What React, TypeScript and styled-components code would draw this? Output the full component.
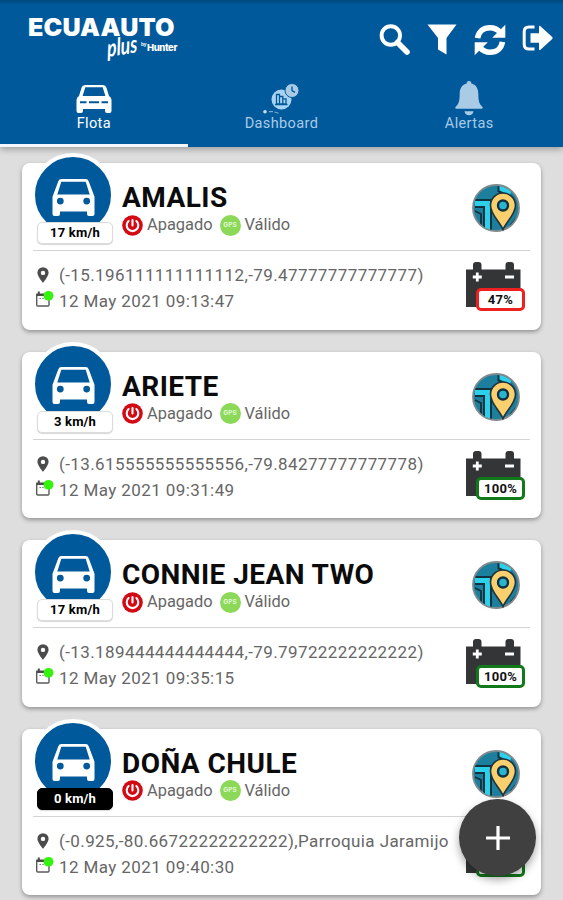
import React from 'react';
import styled, { createGlobalStyle } from 'styled-components';

const GlobalStyle = createGlobalStyle`
  *, *::before, *::after { box-sizing: border-box; }
  html, body { margin: 0; padding: 0; }
  body { background: #dedede; font-family: Roboto, "Liberation Sans", sans-serif; overflow: hidden; }
  svg { display: block; flex: none; }
`;

const Screen = styled.div`
  position: relative;
  width: 563px;
  height: 900px;
  overflow: hidden;
  background: #dedede;
  display: flex;
  flex-direction: column;
`;

const Header = styled.header`
  flex: none;
  height: 146.5px;
  background: linear-gradient(#00477d 0, #00599b 5px, #00599b 100%);
  box-shadow: 0 2px 7px rgba(0, 0, 0, 0.32);
  display: flex;
  flex-direction: column;
`;

const AppBar = styled.div`
  height: 74px;
  display: flex;
  justify-content: space-between;
  padding: 15px 10px 0 28px;
`;

const Logo = styled.div`
  display: flex;
  flex-direction: column;
  color: #fff;
`;

const LogoName = styled.div`
  font: 900 24.4px/24px Inter, sans-serif;
  letter-spacing: 0.1px;
  white-space: nowrap;
  transform-origin: 0 50%;
  transform: scaleX(1.03);
`;

const LogoSub = styled.div`
  display: flex;
  align-items: center;
  height: 17px;
  padding-left: 79px;
`;

const LogoScript = styled.span`
  font: italic 700 24px/20px Lato, sans-serif;
  width: 34px;
  transform-origin: 0 50%;
  transform: rotate(-9deg) skewX(-6deg) scaleX(0.74);
  white-space: nowrap;
`;

const LogoBy = styled.span`
  font: 700 4.5px/8px Inter, sans-serif;
  width: 6px;
  align-self: flex-start;
  margin-top: 2px;
`;

const LogoBrand = styled.span`
  font: 800 9.5px/12px Inter, sans-serif;
  letter-spacing: -0.4px;
`;

const Actions = styled.div`
  display: flex;
  align-items: flex-start;
  padding-top: 9px;
  color: #fff;
`;

const Action = styled.span<{ $gap: number }>`
  margin-left: ${(p) => p.$gap}px;
`;

const Tabs = styled.nav`
  height: 72.5px;
  display: grid;
  grid-template-columns: repeat(3, 1fr);
`;

const Tab = styled.div<{ $active?: boolean }>`
  display: flex;
  flex-direction: column;
  align-items: center;
  padding-top: 7px;
  color: ${(p) => (p.$active ? '#fff' : '#a9cbe6')};
  border-bottom: 3px solid ${(p) => (p.$active ? '#f3f6fb' : 'transparent')};
`;

const TabIcon = styled.span`
  display: flex;
  flex-direction: column;
  justify-content: center;
  height: 35px;
`;

const TabLabel = styled.span`
  margin-top: -2px;
  font-size: 14.5px;
  line-height: 20px;
  letter-spacing: 0.38px;
`;

const List = styled.main`
  flex: none;
  display: flex;
  flex-direction: column;
  gap: 22px;
  padding: 16.5px 22px 0;
`;

const Card = styled.article`
  position: relative;
  height: 166.6px;
  background: #fff;
  border-radius: 8px;
  box-shadow: 0 2px 4px rgba(0, 0, 0, 0.34);
  padding: 0 11px;
`;

const Avatar = styled.div`
  position: absolute;
  left: 9px;
  top: -10px;
  width: 84px;
  height: 84px;
  border-radius: 50%;
  border: 4.5px solid #fff;
  background: #00599b;
  display: flex;
  justify-content: center;
  padding-top: 20.5px;
`;

const Speed = styled.div<{ $stopped?: boolean }>`
  position: absolute;
  left: 15px;
  top: 59px;
  width: 76px;
  height: 22px;
  border-radius: 5px;
  border: 1px solid ${(p) => (p.$stopped ? '#000' : '#dcdcdc')};
  box-shadow: 0 1px 1px rgba(0, 0, 0, 0.16);
  background: ${(p) => (p.$stopped ? '#000' : '#fff')};
  color: ${(p) => (p.$stopped ? '#fff' : '#000')};
  font-size: 13px;
  font-weight: 700;
  letter-spacing: 0.2px;
  line-height: 19px;
  text-align: center;
`;

const CardTop = styled.div`
  height: 88px;
  border-bottom: 1px solid #d4d4d4;
  display: flex;
  justify-content: space-between;
  padding: 19px 10px 0 89px;
`;

const Name = styled.h2`
  margin: 0;
  font-size: 28px;
  line-height: 32px;
  font-weight: 700;
  letter-spacing: 0.45px;
  color: #0b0b0b;
  white-space: nowrap;
`;

const StatusRow = styled.div`
  display: flex;
  align-items: center;
  height: 22px;
  font-size: 16.4px;
  color: #666;
`;

const StatusText = styled.span`
  margin: 0 7px 0 4px;
  line-height: 22px;
`;

const MapButton = styled.div`
  padding-top: 2px;
`;

const CardBottom = styled.div`
  display: flex;
  justify-content: space-between;
  padding: 11px 5px 0 1px;
`;

const Info = styled.div`
  display: flex;
  flex-direction: column;
`;

const InfoLine = styled.div`
  display: grid;
  grid-template-columns: 25px auto;
  align-items: center;
  height: 26px;
  font-size: 17px;
  letter-spacing: 0.4px;
  color: #666;
  white-space: nowrap;
`;

const Battery = styled.div`
  position: relative;
  width: 60px;
  height: 50px;
`;

const BatteryLevel = styled.div<{ $low?: boolean }>`
  position: absolute;
  right: 0;
  top: 26px;
  width: 49px;
  height: 23px;
  border: 3px solid ${(p) => (p.$low ? '#ee2020' : '#11791a')};
  border-radius: 5px;
  background: #fff;
  color: #111;
  font-size: 13px;
  font-weight: 700;
  letter-spacing: 0.3px;
  line-height: 18px;
  text-align: center;
`;

const Fab = styled.button`
  position: absolute;
  left: 459px;
  top: 799px;
  width: 77px;
  height: 77px;
  padding: 0;
  border: 0;
  border-radius: 50%;
  background: #404040;
  box-shadow: 0 4px 9px rgba(0, 0, 0, 0.35);
  display: flex;
  align-items: center;
  justify-content: center;
`;

const SearchIcon = () => (
  <svg width="31" height="31" viewBox="0 0 31 31">
    <circle cx="11.800" cy="11.500" r="9.200" fill="none" stroke="currentColor" strokeWidth="3.900" />
    <path d="M18.500 18.500 28 28" stroke="currentColor" strokeWidth="5.600" strokeLinecap="round" />
  </svg>
);

const FilterIcon = () => (
  <svg width="30" height="31" viewBox="0 0 30 31">
    <path fill="currentColor" d="M.500.500h29L19.500 14v16.500L11 25.500V14Z" />
  </svg>
);

const FleetIcon = () => (
  <svg width="36" height="30" viewBox="0 0 36 30">
    <path fillRule="evenodd" fill="currentColor" d="M9 1h18q2.600 0 3.400 2.500L33 12q2.500 1.500 2.500 4v11q0 2-2 2h-2.500q-2 0-2-2v-2H7v2q0 2-2 2H2.500q-2 0-2-2V16q0-2.500 2.500-4L5.600 3.500Q6.400 1 9 1ZM9.300 3.300 6.600 12h22.800L26.700 3.300ZM4 17.300v2h6.500v-2Zm9 0v2h10v-2Zm12.500 0v2h6.500v-2Z" />
  </svg>
);

const DashboardIcon = () => (
  <svg width="36" height="32" viewBox="0 0 36 32">
    <circle cx="18.500" cy="16.500" r="10" fill="#a9d3f3" />
    <path d="M13.500 21V11.500h3V21h0V13.500h3.300V21h0V15.800h3.200V21ZM12 21.500h12.500" fill="none" stroke="#00599b" strokeWidth="1.300" />
    <circle cx="29" cy="7.500" r="7" fill="#a9cbe6" stroke="#00599b" strokeWidth="1" />
    <path d="M29 3.500v4.200l3 1.700" fill="none" stroke="#00599b" strokeWidth="1.400" />
    <circle cx="2" cy="28.700" r="1.800" fill="#c9e0f2" />
    <path d="M6 28.700h4M11.500 29l4 1.300" stroke="#79abd3" strokeWidth="1.200" />
  </svg>
);

const BellIcon = () => (
  <svg width="28" height="35" viewBox="0 0 28 35">
    <path fill="currentColor" d="M14 0a2.200 2.200 0 0 1 2.200 2.600C21 3.800 23.300 7.500 23.300 12.500c0 8 1.200 10.800 4 13.300.9.900.3 2-.9 2H1.600c-1.200 0-1.800-1.100-.9-2 2.800-2.500 4-5.300 4-13.300 0-5 2.300-8.700 7.100-9.900A2.200 2.200 0 0 1 14 0ZM9.500 30.300h9c-.3 2.400-2.200 4-4.500 4s-4.200-1.600-4.500-4Z" />
  </svg>
);

const RefreshIcon = () => (
  <svg width="32" height="32" viewBox="0 0 32 32">
    <g fill="none" stroke="currentColor" strokeWidth="5.600">
      <path d="M3.600 14.200C4.600 7.500 9.500 3.800 16 3.800c4.200 0 7.500 1.700 10.200 4.600" />
      <path d="M28.400 17.800c-1 6.700-5.900 10.400-12.400 10.400-4.200 0-7.500-1.700-10.200-4.600" />
    </g>
    <path fill="currentColor" d="M31.300.800v12.900H18.200ZM.700 31.200V18.300h13.100Z" />
  </svg>
);

const ExitIcon = () => (
  <svg width="31" height="28" viewBox="0 0 31 28">
    <path d="M12.500 3H7Q2.200 3 2.200 7.800v12.400Q2.200 25 7 25h5.500" fill="none" stroke="currentColor" strokeWidth="3" />
    <path fill="currentColor" d="M8.500 9.300H17V3.200q0-2.200 1.700-.8L30 12.800q1.200 1.200 0 2.400L18.700 25.600q-1.700 1.400-1.700-.8v-6.100H8.500Z" />
  </svg>
);

const CarIcon = () => (
  <svg width="43" height="39" viewBox="0 0 43 39">
    <path fillRule="evenodd" fill="#fff" d="M9.500 1h24q2.500 0 3.300 2.400l5.700 15.400V36q0 2-2 2h-3.500q-2 0-2-2v-2.500H8V36q0 2-2 2H2.500q-2 0-2-2V18.800L6.200 3.400Q7 1 9.500 1ZM9.300 3.700 5.300 16.500h32.400l-4-12.800ZM8.300 19.700a3.400 3.400 0 1 0 0 6.800 3.400 3.400 0 0 0 0-6.800Zm26.400 0a3.400 3.400 0 1 0 0 6.800 3.400 3.400 0 0 0 0-6.800Z" />
  </svg>
);

const PowerIcon = () => (
  <svg width="21" height="21" viewBox="0 0 21 21">
    <circle cx="10.500" cy="10.500" r="10.300" fill="#d20a14" />
    <path d="M6.600 6a5.800 5.800 0 1 0 7.800 0M10.500 5v5.500" fill="none" stroke="#fff" strokeWidth="2.100" strokeLinecap="round" />
  </svg>
);

const GpsBadge = styled.span`
  width: 21px;
  height: 21px;
  border-radius: 50%;
  background: #8cd95a;
  color: #e2f8d4;
  font: 700 6.500px/21px Inter, sans-serif;
  text-align: center;
`;

const MapIcon = () => (
  <svg width="48" height="48" viewBox="0 0 48 48">
    <clipPath id="mapDisc"><circle cx="24" cy="24" r="23" /></clipPath>
    <g clipPath="url(#mapDisc)">
      <path fill="#1b7f9d" d="M0 0h48v48H0Z" />
      <path d="M3 19.500h12.500V48M30-1v6l9 4" fill="none" stroke="#12313e" strokeWidth="9" />
      <path d="M3 19.500h12.500V48M30-1v6l9 4" fill="none" stroke="#2cd0ea" strokeWidth="5" />
      <path d="M3 27l6 3v16M38 42l10-12" fill="none" stroke="#12313e" strokeWidth="1.800" />
    </g>
    <circle cx="24" cy="24" r="23" fill="none" stroke="#7e8a8e" strokeWidth="1.800" />
    <path d="M31 45.500C27 37 18.500 30 18.500 21.500a12.500 12.500 0 0 1 25 0C43.500 30 35 37 31 45.500Z" fill="#fad06f" stroke="#22323a" strokeWidth="1.600" />
    <circle cx="31" cy="21.500" r="5" fill="#29b5d2" stroke="#12313e" strokeWidth="2.400" />
  </svg>
);

const PinIcon = () => (
  <svg width="18" height="18" viewBox="1 0 18 18">
    <path fillRule="evenodd" fill="#4c4c4c" d="M10 1.200a5.600 5.600 0 0 1 5.600 5.600C15.600 10.500 10 16.800 10 16.800S4.400 10.500 4.400 6.800A5.600 5.600 0 0 1 10 1.200Zm0 3.500a2.200 2.200 0 1 0 0 4.400 2.200 2.200 0 0 0 0-4.400Z" />
  </svg>
);

const CalendarIcon = () => (
  <svg width="20" height="22" viewBox="0 0 20 22">
    <path d="M2.700 4.500V15q0 1 1 1H14q1 0 1-1V10M2.700 5H10" fill="none" stroke="#5b5b5b" strokeWidth="1.400" />
    <path d="M2.200 3.600h8.500v2.400H2.200ZM3.800 1.500h2v3h-2Z" fill="#4c4c4c" />
    <path d="M5.500 8.500h5" stroke="#777" strokeWidth="1" strokeDasharray="1.500 1.200" />
    <circle cx="14.500" cy="5.800" r="4.900" fill="#35f40b" />
  </svg>
);

const BatteryIcon = () => (
  <svg width="56" height="46" viewBox="0 0 56 46">
    <path fill="#343537" d="M1 7.500h7V3q0-3 3-3h2.500q3 0 3 3v4.500h24V3q0-3 3-3H46q3 0 3 3v4.500h6.500V45H1Z" />
    <path d="M12.300 10.500v9M7.800 15h9M40 15h9" stroke="#fff" strokeWidth="2.800" />
  </svg>
);

interface Vehicle {
  name: string;
  speed: number;
  place: string;
  date: string;
  battery: number;
}

const vehicles: Vehicle[] = [
  { name: 'AMALIS', speed: 17, place: '(-15.196111111111112,-79.47777777777777)', date: '12 May 2021 09:13:47', battery: 47 },
  { name: 'ARIETE', speed: 3, place: '(-13.615555555555556,-79.84277777777778)', date: '12 May 2021 09:31:49', battery: 100 },
  { name: 'CONNIE JEAN TWO', speed: 17, place: '(-13.189444444444444,-79.79722222222222)', date: '12 May 2021 09:35:15', battery: 100 },
  { name: 'DOÑA CHULE', speed: 0, place: '(-0.925,-80.66722222222222),Parroquia Jaramijo', date: '12 May 2021 09:40:30', battery: 100 },
];

const VehicleCard = ({ name, speed, place, date, battery }: Vehicle) => (
  <Card>
    <CardTop>
      <div>
        <Name>{name}</Name>
        <StatusRow>
          <PowerIcon />
          <StatusText>Apagado</StatusText>
          <GpsBadge>GPS</GpsBadge>
          <StatusText>Válido</StatusText>
        </StatusRow>
      </div>
      <MapButton><MapIcon /></MapButton>
    </CardTop>
    <CardBottom>
      <Info>
        <InfoLine><PinIcon />{place}</InfoLine>
        <InfoLine><CalendarIcon />{date}</InfoLine>
      </Info>
      <Battery>
        <BatteryIcon />
        <BatteryLevel $low={battery < 50}>{battery}%</BatteryLevel>
      </Battery>
    </CardBottom>
    <Avatar><CarIcon /></Avatar>
    <Speed $stopped={speed === 0}>{speed} km/h</Speed>
  </Card>
);

export default function App() {
  return (
    <>
      <GlobalStyle />
      <Screen>
        <Header>
          <AppBar>
            <Logo>
              <LogoName>ECUAAUTO</LogoName>
              <LogoSub>
                <LogoScript>plus</LogoScript>
                <LogoBy>by</LogoBy>
                <LogoBrand>Hunter</LogoBrand>
              </LogoSub>
            </Logo>
            <Actions>
              <Action $gap={0}><SearchIcon /></Action>
              <Action $gap={17}><FilterIcon /></Action>
              <Action $gap={17}><RefreshIcon /></Action>
              <Action $gap={16}><ExitIcon /></Action>
            </Actions>
          </AppBar>
          <Tabs>
            <Tab $active><TabIcon><FleetIcon /></TabIcon><TabLabel>Flota</TabLabel></Tab>
            <Tab><TabIcon><DashboardIcon /></TabIcon><TabLabel>Dashboard</TabLabel></Tab>
            <Tab><TabIcon><BellIcon /></TabIcon><TabLabel>Alertas</TabLabel></Tab>
          </Tabs>
        </Header>
        <List>
          {vehicles.map((v) => <VehicleCard key={v.name} {...v} />)}
        </List>
        <Fab aria-label="+">
          <svg width="26" height="26" viewBox="0 0 26 26">
            <path d="M13 1v24M1 13h24" stroke="#fff" strokeWidth="3.200" />
          </svg>
        </Fab>
      </Screen>
    </>
  );
}
